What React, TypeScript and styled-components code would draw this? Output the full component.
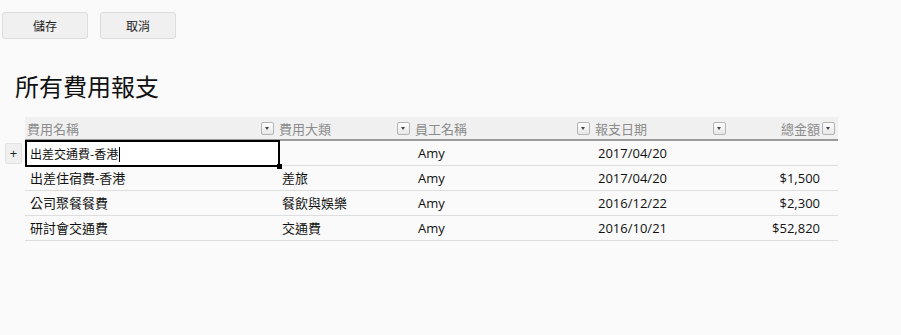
import React from "react";
import styled, { createGlobalStyle } from "styled-components";

const GlobalStyle = createGlobalStyle`
  html, body {
    margin: 0;
    padding: 0;
    background: #fafafa;
    font-family: "Open Sans", "Noto Sans CJK TC", sans-serif;
    color: #111;
  }
`;

const Page = styled.div`
  width: 901px;
  height: 335px;
  padding-top: 12px;
  box-sizing: border-box;
`;

const Toolbar = styled.div`
  display: flex;
  gap: 12px;
  padding-left: 2px;
`;

const Button = styled.button<{ $w: number }>`
  width: ${p => p.$w}px;
  height: 27px;
  border: 1px solid #dcdcdc;
  border-radius: 3px;
  background: #f0f0f0;
  font-family: "Noto Sans CJK TC", sans-serif;
  font-size: 12px;
  color: #222;
  padding: 0;
`;

const Title = styled.h1`
  margin: 30px 0 0 15px;
  font-family: "Noto Sans CJK TC", sans-serif;
  font-size: 24px;
  font-weight: 400;
  line-height: 34px;
  color: #111;
`;

const Table = styled.div`
  margin-top: 14px;
`;

const Row = styled.div`
  display: flex;
`;

const Gutter = styled.div`
  width: 25px;
  flex: none;
  display: flex;
  align-items: center;
`;

const AddButton = styled.div`
  margin-left: 5px;
  width: 15px;
  height: 19px;
  border: 1px solid #e2e2e2;
  border-radius: 2px;
  background: #f0f0f0;
  font-size: 13px;
  line-height: 18px;
  text-align: center;
  color: #222;
`;

const HeaderCells = styled.div`
  display: flex;
  height: 22px;
  background: #f0f0f0;
  border-bottom: 2px solid #9a9a9a;
`;

const Cells = styled.div`
  display: flex;
  height: 24px;
  border-bottom: 1px solid #dedede;
`;

const HeadCell = styled.div<{ $w: number; $right?: boolean }>`
  width: ${p => p.$w}px;
  box-sizing: border-box;
  display: flex;
  align-items: center;
  justify-content: ${p => (p.$right ? "flex-end" : "space-between")};
  gap: 2px;
  padding: 0 3px 0 2px;
  font-family: "Noto Sans CJK TC", sans-serif;
  font-size: 13px;
  color: #8c8c8c;
`;

const Drop = styled.span`
  position: relative;
  width: 11px;
  height: 11px;
  border: 1px solid #b4b4b4;
  border-radius: 2px;
  background: linear-gradient(#ffffff, #e6e6e6);
  flex: none;
  &::after {
    content: "";
    position: absolute;
    left: 3px;
    top: 4px;
    border-left: 2.5px solid transparent;
    border-right: 2.5px solid transparent;
    border-top: 3px solid #444;
  }
`;

const Cell = styled.div<{ $w: number; $right?: boolean }>`
  position: relative;
  width: ${p => p.$w}px;
  box-sizing: border-box;
  padding: ${p => (p.$right ? "0 18px 0 0" : "0 0 0 5px")};
  text-align: ${p => (p.$right ? "right" : "left")};
  font-family: "Open Sans", "Noto Sans CJK TC", sans-serif;
  font-size: 13px;
  line-height: 24px;
  color: #111;
  white-space: nowrap;
`;

const Editor = styled.div`
  position: absolute;
  left: 0;
  top: -1px;
  right: -3px;
  bottom: -2px;
  border: 2px solid #000;
  background: #fff;
  font-family: "Noto Sans CJK TC", sans-serif;
  font-size: 12px;
  line-height: 23px;
  padding-left: 3px;
`;

const Caret = styled.span`
  display: inline-block;
  width: 1px;
  height: 15px;
  margin-left: 1px;
  background: #000;
  vertical-align: -3px;
`;

const Handle = styled.span`
  position: absolute;
  right: -4px;
  bottom: -4px;
  width: 5px;
  height: 5px;
  background: #000;
`;

const widths = [252, 136, 180, 136, 109];
const headers = ["費用名稱", "費用大類", "員工名稱", "報支日期", "總金額"];

const rows = [
  ["出差交通費-香港", "", "Amy", "2017/04/20", ""],
  ["出差住宿費-香港", "差旅", "Amy", "2017/04/20", "$1,500"],
  ["公司聚餐餐費", "餐飲與娛樂", "Amy", "2016/12/22", "$2,300"],
  ["研討會交通費", "交通費", "Amy", "2016/10/21", "$52,820"],
];

export default function App() {
  return (
    <Page>
      <GlobalStyle />
      <Toolbar>
        <Button $w={86}>儲存</Button>
        <Button $w={76}>取消</Button>
      </Toolbar>
      <Title>所有費用報支</Title>
      <Table>
        <Row>
          <Gutter />
          <HeaderCells>
            {headers.map((h, i) => (
              <HeadCell key={h} $w={widths[i]} $right={i === 4}>
                <span>{h}</span>
                <Drop />
              </HeadCell>
            ))}
          </HeaderCells>
        </Row>
        {rows.map((r, ri) => (
          <Row key={ri}>
            <Gutter>{ri === 0 && <AddButton>+</AddButton>}</Gutter>
            <Cells>
              {r.map((v, ci) => (
                <Cell key={ci} $w={widths[ci]} $right={ci === 4}>
                  {ri === 0 && ci === 0 ? (
                    <Editor>
                      {v}
                      <Caret />
                      <Handle />
                    </Editor>
                  ) : (
                    v
                  )}
                </Cell>
              ))}
            </Cells>
          </Row>
        ))}
      </Table>
    </Page>
  );
}
